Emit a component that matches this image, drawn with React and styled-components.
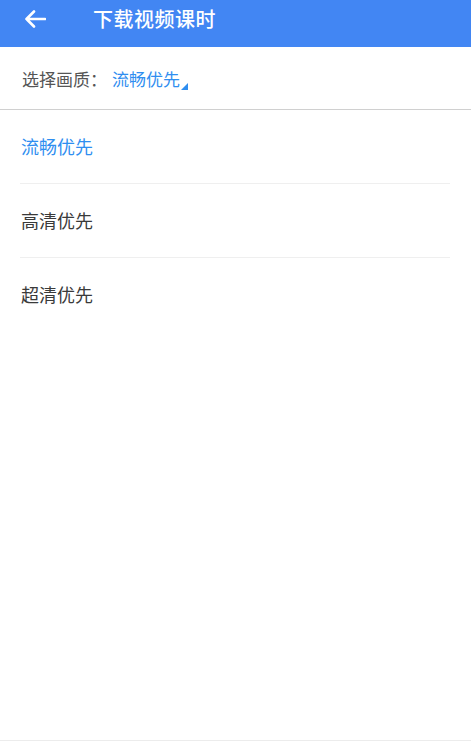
import React, { useState } from "react";
import styled, { createGlobalStyle } from "styled-components";

const GlobalStyle = createGlobalStyle`
  html, body { margin: 0; padding: 0; background: #ffffff; }
  body { font-family: "Noto Sans CJK SC", "Noto Sans", sans-serif; }
`;

const Page = styled.div`
  width: 471px;
  height: 741px;
  display: flex;
  flex-direction: column;
  background: #fff;
  border-bottom: 1px solid #ececec;
  box-sizing: border-box;
  overflow: hidden;
`;

const TopBar = styled.div`
  height: 47px;
  background: #4286f3;
  display: flex;
  align-items: flex-start;
  padding-top: 6px;
  box-sizing: border-box;
`;

const BackButton = styled.button`
  width: 72px;
  height: 26px;
  padding: 0 0 0 24px;
  border: none;
  background: none;
  display: flex;
  align-items: center;
  cursor: pointer;
`;

const Title = styled.h1`
  margin: 0 0 0 21px;
  font-size: 20px;
  line-height: 26px;
  font-weight: 500;
  color: #fff;
  letter-spacing: 0.5px;
`;

const QualityBar = styled.div`
  height: 63px;
  display: flex;
  align-items: center;
  padding: 0 0 0 22px;
  box-sizing: border-box;
  border-bottom: 1px solid #d0d0d0;
  font-size: 17px;
`;

const Label = styled.span`
  color: #555;
`;

const Current = styled.span`
  position: relative;
  margin-left: 5px;
  color: #2f8ef0;
  padding-right: 8px;
  &::after {
    content: "";
    position: absolute;
    right: 0;
    bottom: 1px;
    border-style: solid;
    border-width: 0 0 7px 7px;
    border-color: transparent transparent #2f8ef0 transparent;
  }
`;

const Options = styled.ul`
  list-style: none;
  margin: 0;
  padding: 0 21px 0 20px;
`;

const Option = styled.li`
  height: 74px;
  display: flex;
  align-items: center;
  padding: 0 0 2px 1px;
  font-size: 18px;
  color: ${(p) => (p.$active ? "#2f8ef0" : "#3a3a3a")};
  border-bottom: ${(p) => (p.$last ? "none" : "1px solid #efefef")};
  box-sizing: border-box;
  cursor: pointer;
`;

const options = ["流畅优先", "高清优先", "超清优先"];

export default function App() {
  const [quality, setQuality] = useState(0);

  return (
    <>
      <GlobalStyle />
      <Page>
        <TopBar>
          <BackButton aria-label="返回">
            <svg width="22" height="18" viewBox="0 0 22 18" fill="none">
              <path
                d="M21 9H2.5M10 1.5L2.5 9L10 16.5"
                stroke="#fff"
                strokeWidth="2.6"
                strokeLinecap="round"
                strokeLinejoin="round"
              />
            </svg>
          </BackButton>
          <Title>下载视频课时</Title>
        </TopBar>
        <QualityBar>
          <Label>选择画质：</Label>
          <Current>{options[quality]}</Current>
        </QualityBar>
        <Options>
          {options.map((o, i) => (
            <Option
              key={o}
              $active={i === quality}
              $last={i === options.length - 1}
              onClick={() => setQuality(i)}
            >
              {o}
            </Option>
          ))}
        </Options>
      </Page>
    </>
  );
}
